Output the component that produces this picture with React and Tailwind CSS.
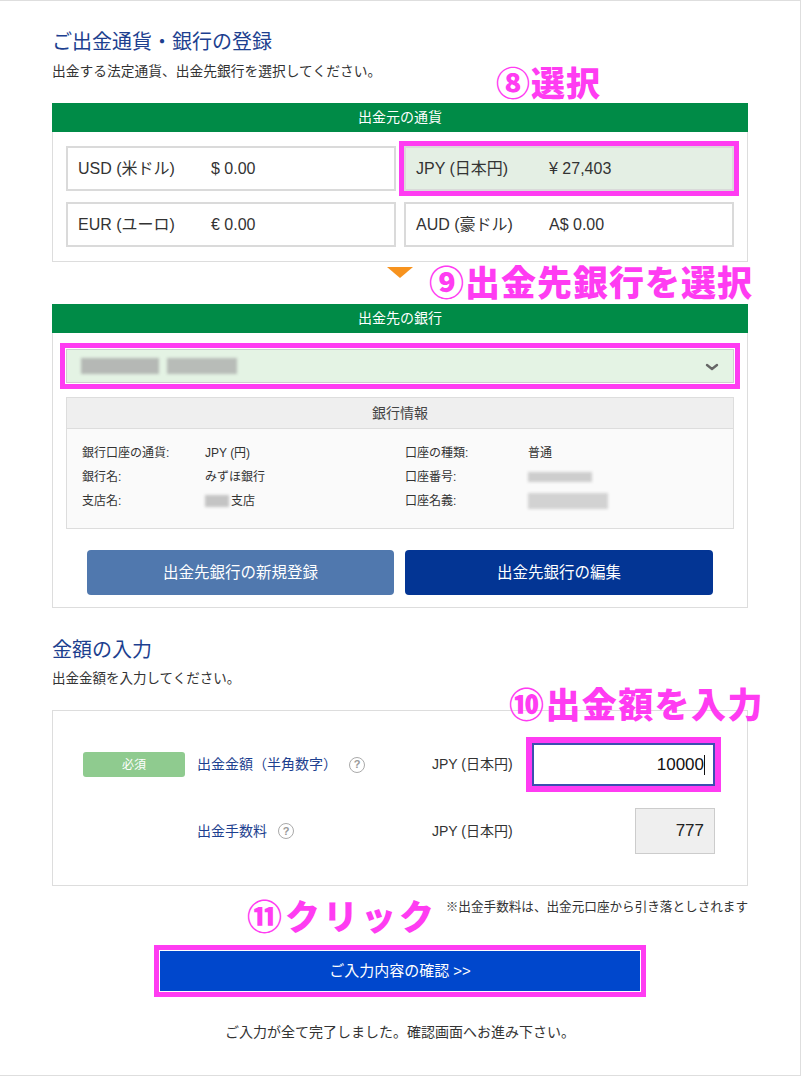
import React from "react";

const ff = "font-['Liberation_Sans','Noto_Sans_CJK_JP',sans-serif]";
const anno = "font-['Noto_Sans_CJK_JP',sans-serif] font-black text-[#ff3cf2] leading-none whitespace-nowrap";

function Blur({ w, h = 14, shade = "#bdbdbd", className = "" }) {
  return (
    <span
      className={`inline-block align-middle blur-[1.5px] ${className}`}
      style={{ width: w, height: h, background: shade }}
    />
  );
}

function Cell({ label, value, selected }) {
  return (
    <div
      className={`relative h-[45px] border-2 border-[#dadada] flex items-center pl-[10px] text-[16px] text-[#333] ${
        selected ? "bg-[#e4efe4]" : "bg-white"
      }`}
    >
      <span className="w-[133px]">{label}</span>
      <span>{value}</span>
      {selected && (
        <div className="absolute -inset-[7px] border-[5px] border-[#ff3cf2] pointer-events-none" />
      )}
    </div>
  );
}

function Help() {
  return (
    <span className="inline-flex items-center justify-center w-[16px] h-[16px] rounded-full border-[1.5px] border-[#aaa] text-[#999] text-[11px] leading-none font-bold">
      ?
    </span>
  );
}

function InfoRow({ label, children }) {
  return (
    <div className="flex h-[24px] items-center">
      <span className="w-[123px]">{label}</span>
      <span className="flex items-center">{children}</span>
    </div>
  );
}

export default function App() {
  return (
    <div className={`relative w-[801px] h-[1076px] bg-white border-t border-r border-b border-[#dedede] px-[52px] ${ff}`}>
      {/* Section 1 */}
      <h2 className="pt-[28px] text-[20px] leading-[26px] text-[#1d3f8f]">ご出金通貨・銀行の登録</h2>
      <p className="mt-[7px] text-[13.75px] leading-[20px] text-[#333]">出金する法定通貨、出金先銀行を選択してください。</p>

      <div className="mt-[21px] h-[29px] bg-[#008b47] flex items-center justify-center text-white text-[14px]">出金元の通貨</div>
      <div className="h-[130px] border-x border-b border-[#dddddd] pt-[14px] px-[13px] grid grid-cols-2 gap-x-[8px] gap-y-[11px] content-start">
        <Cell label="USD (米ドル)" value="$ 0.00" />
        <Cell label="JPY (日本円)" value="¥ 27,403" selected />
        <Cell label="EUR (ユーロ)" value="€ 0.00" />
        <Cell label="AUD (豪ドル)" value="A$ 0.00" />
      </div>

      {/* Arrow */}
      <div className="h-[42px] pt-[5px]">
        <div className="mx-auto w-0 h-0 border-l-[13px] border-r-[13px] border-t-[11px] border-l-transparent border-r-transparent border-t-[#f7931e]" />
      </div>

      {/* Section 2 */}
      <div className="h-[29px] bg-[#008b47] flex items-center justify-center text-white text-[14px]">出金先の銀行</div>
      <div className="h-[275px] border-x border-b border-[#dddddd] pt-[16px] px-[13px]">
        <div className="relative h-[34px] bg-[#e4f3e4] border border-[#cfcfcf] flex items-center pl-[14px] gap-[8px]">
          <Blur w={78} h={16} shade="#b5b8b5" />
          <Blur w={70} h={16} shade="#b8bcb8" />
          <svg className="absolute right-[14px] top-[13px]" width="14" height="8" viewBox="0 0 14 8">
            <path d="M2 2 L7 6 L12 2" fill="none" stroke="#666" strokeWidth="2.4" strokeLinecap="round" strokeLinejoin="round" />
          </svg>
          <div className="absolute -inset-[7px] border-[5px] border-[#ff3cf2] pointer-events-none" />
        </div>

        <div className="mt-[14px] border border-[#dddddd]">
          <div className="h-[31px] bg-[#efefef] border-b border-[#dddddd] flex items-center justify-center text-[14px] text-[#444]">銀行情報</div>
          <div className="h-[99px] bg-[#fafafa] pt-[12px] pl-[15px] grid grid-cols-[323px_1fr] text-[12px] text-[#333]">
            <div>
              <InfoRow label="銀行口座の通貨:">JPY (円)</InfoRow>
              <InfoRow label="銀行名:">みずほ銀行</InfoRow>
              <InfoRow label="支店名:">
                <Blur w={24} h={12} shade="#c4c4c4" className="mr-[2px]" />支店
              </InfoRow>
            </div>
            <div>
              <InfoRow label="口座の種類:">普通</InfoRow>
              <InfoRow label="口座番号:">
                <Blur w={64} h={10} shade="#cdcdcd" />
              </InfoRow>
              <InfoRow label="口座名義:">
                <Blur w={80} h={16} shade="#d2d2d2" />
              </InfoRow>
            </div>
          </div>
        </div>

        <div className="mt-[21px] flex justify-center gap-[11px]">
          <div className="w-[307px] h-[45px] rounded-[4px] bg-[#5078ae] flex items-center justify-center text-white text-[15.5px]">出金先銀行の新規登録</div>
          <div className="w-[308px] h-[45px] rounded-[4px] bg-[#033594] flex items-center justify-center text-white text-[15.5px]">出金先銀行の編集</div>
        </div>
      </div>

      {/* Section 3 */}
      <h2 className="mt-[29px] text-[20px] leading-[26px] text-[#1d3f8f]">金額の入力</h2>
      <p className="mt-[6px] text-[13.5px] leading-[20px] text-[#333]">出金金額を入力してください。</p>

      <div className="mt-[21px] h-[176px] border border-[#dddddd] pt-[32px] pl-[30px]">
        <div className="flex items-center h-[43px]">
          <div className="w-[102px]">
            <div className="h-[25px] rounded-[3px] bg-[#8fcb8f] flex items-center justify-center text-white text-[12px]">必須</div>
          </div>
          <div className="ml-[12px] w-[235px] flex items-center gap-[12px] text-[14px] text-[#1d3f8f]">
            <span>出金金額（半角数字）</span>
            <Help />
          </div>
          <div className="w-[100px] text-[14px] text-[#333]">JPY (日本円)</div>
          <div className="relative w-[183px] h-[43px] border-2 border-[#3b4fb0] bg-white flex items-center justify-end pr-[8px] text-[17px] text-[#111]">
            <span>10000</span>
            <span className="w-[1px] h-[20px] bg-[#111]" />
            <div className="absolute -inset-[8px] border-[6px] border-[#ff3cf2] pointer-events-none" />
          </div>
        </div>
        <div className="mt-[22px] flex items-center h-[46px]">
          <div className="w-[102px]" />
          <div className="ml-[12px] w-[235px] flex items-center gap-[11px] text-[14px] text-[#1d3f8f]">
            <span>出金手数料</span>
            <Help />
          </div>
          <div className="w-[100px] text-[14px] text-[#333]">JPY (日本円)</div>
          <div className="w-[183px] flex justify-end">
            <div className="w-[80px] h-[46px] bg-[#efefef] border border-[#cccccc] flex items-center justify-end pr-[10px] text-[17px] text-[#222]">777</div>
          </div>
        </div>
      </div>

      <p className="mt-[12px] text-right text-[12.6px] leading-[18px] text-[#333]">※出金手数料は、出金元口座から引き落としされます</p>

      <div className="mt-[35px] relative w-[480px] h-[40px] mx-auto bg-[#0047cc] flex items-center justify-center text-white text-[15px]">
        ご入力内容の確認 &gt;&gt;
        <div className="absolute -inset-[6px] border-[5px] border-[#ff3cf2] pointer-events-none" />
      </div>

      <p className="mt-[31px] text-center text-[14px] leading-[20px] text-[#333]">ご入力が全て完了しました。確認画面へお進み下さい。</p>

      {/* Annotations */}
      <div className={`absolute left-[496px] top-[64px] text-[34px] tracking-[1px] ${anno}`}>⑧選択</div>
      <div className={`absolute left-[429px] top-[262px] text-[35px] tracking-[1px] ${anno}`}>⑨出金先銀行を選択</div>
      <div className={`absolute left-[509px] top-[684px] text-[35px] tracking-[1.4px] ${anno}`}>⑩出金額を入力</div>
      <div className={`absolute left-[247px] top-[896px] text-[35px] tracking-[3px] ${anno}`}>⑪クリック</div>
    </div>
  );
}
